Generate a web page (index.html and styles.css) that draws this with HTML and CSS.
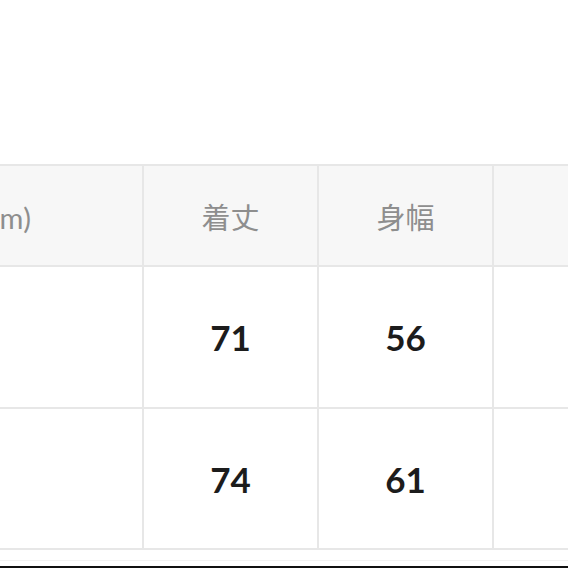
FILE: index.html
```html
<!DOCTYPE html>
<html lang="ja">
<head>
<meta charset="utf-8">
<title>サイズ表</title>
<link rel="stylesheet" href="styles.css">
</head>
<body>
<div class="page">
  <div class="table-wrap">
    <div class="size-table">
      <div class="cell head first">サイズ(cm)</div>
      <div class="cell head">着丈</div>
      <div class="cell head">身幅</div>
      <div class="cell head"></div>

      <div class="cell"></div>
      <div class="cell num">71</div>
      <div class="cell num">56</div>
      <div class="cell num"></div>

      <div class="cell"></div>
      <div class="cell num">74</div>
      <div class="cell num">61</div>
      <div class="cell num"></div>
    </div>
  </div>
  <div class="faint-rule"></div>
  <div class="dark-rule"></div>
</div>
</body>
</html>
```

FILE: styles.css
```css
html, body {
  margin: 0;
  padding: 0;
  background: #ffffff;
}

.page {
  width: 568px;
  height: 568px;
  overflow: hidden;
  display: flex;
  flex-direction: column;
}

.table-wrap {
  margin-top: 164px;
  overflow: hidden;
  width: 568px;
}

.size-table {
  display: grid;
  grid-template-columns: 180px 173px 173px 173px;
  grid-template-rows: 99px 140px 139px;
  gap: 2px;
  padding: 2px;
  background: #e7e7e7;
  margin-left: -40px;
  width: max-content;
}

.cell {
  background: #ffffff;
  display: flex;
  align-items: center;
  justify-content: center;
  font-family: Lato, "Noto Sans CJK JP", sans-serif;
}

.head {
  background: #f7f7f7;
  color: #8e8e8e;
  font-size: 29px;
  font-weight: 400;
}

.head.first {
  justify-content: flex-end;
  padding-right: 111px;
  white-space: nowrap;
}

.num {
  color: #1c1c1c;
  font-size: 35px;
  font-weight: 700;
}

.faint-rule {
  margin-top: 10px;
  height: 1px;
  background: #f2f2f2;
}

.dark-rule {
  margin-top: auto;
  height: 2px;
  background: #111111;
}
```
